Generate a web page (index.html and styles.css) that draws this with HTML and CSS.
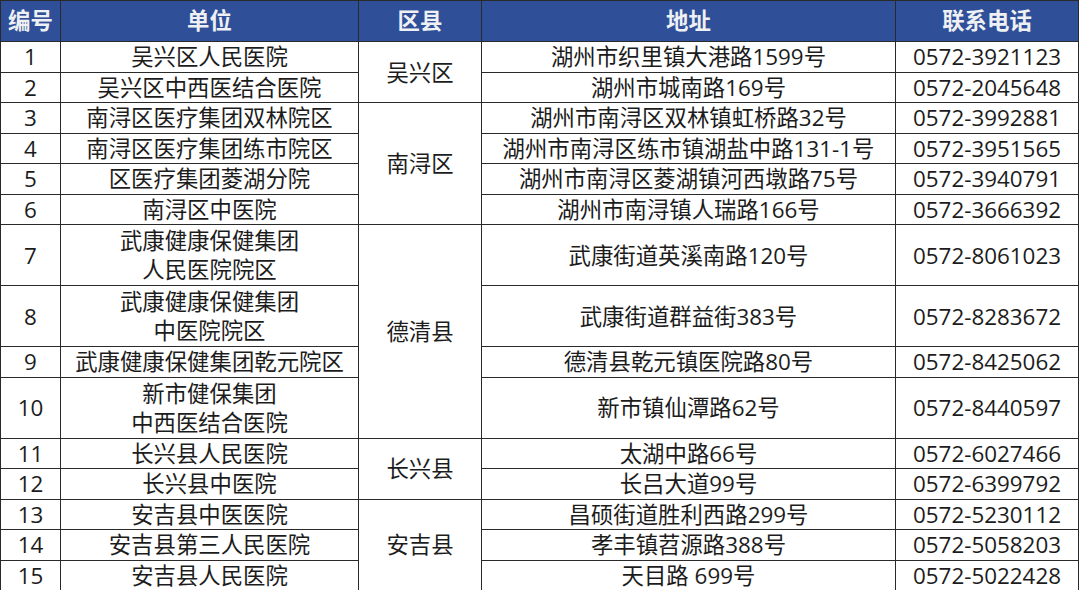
FILE: index.html
```html
<!DOCTYPE html>
<html lang="zh-CN">
<head>
<meta charset="utf-8">
<link rel="stylesheet" href="styles.css">
</head>
<body>
<table class="grid">
  <colgroup>
    <col class="c-no"><col class="c-unit"><col class="c-area"><col class="c-addr"><col class="c-tel">
  </colgroup>
  <thead>
    <tr class="head"><th>编号</th><th>单位</th><th>区县</th><th>地址</th><th>联系电话</th></tr>
  </thead>
  <tbody>
    <tr class="r1"><td>1</td><td>吴兴区人民医院</td><td rowspan="2">吴兴区</td><td>湖州市织里镇大港路1599号</td><td>0572-3921123</td></tr>
    <tr class="r1"><td>2</td><td>吴兴区中西医结合医院</td><td>湖州市城南路169号</td><td>0572-2045648</td></tr>
    <tr class="r1"><td>3</td><td>南浔区医疗集团双林院区</td><td rowspan="4">南浔区</td><td>湖州市南浔区双林镇虹桥路32号</td><td>0572-3992881</td></tr>
    <tr class="r1"><td>4</td><td>南浔区医疗集团练市院区</td><td>湖州市南浔区练市镇湖盐中路131-1号</td><td>0572-3951565</td></tr>
    <tr class="r1"><td>5</td><td>区医疗集团菱湖分院</td><td>湖州市南浔区菱湖镇河西墩路75号</td><td>0572-3940791</td></tr>
    <tr class="r1"><td>6</td><td>南浔区中医院</td><td>湖州市南浔镇人瑞路166号</td><td>0572-3666392</td></tr>
    <tr class="r2"><td>7</td><td>武康健康保健集团<br>人民医院院区</td><td rowspan="4">德清县</td><td>武康街道英溪南路120号</td><td>0572-8061023</td></tr>
    <tr class="r2"><td>8</td><td>武康健康保健集团<br>中医院院区</td><td>武康街道群益街383号</td><td>0572-8283672</td></tr>
    <tr class="r1"><td>9</td><td>武康健康保健集团乾元院区</td><td>德清县乾元镇医院路80号</td><td>0572-8425062</td></tr>
    <tr class="r2"><td>10</td><td>新市健保集团<br>中西医结合医院</td><td>新市镇仙潭路62号</td><td>0572-8440597</td></tr>
    <tr class="r1"><td>11</td><td>长兴县人民医院</td><td rowspan="2">长兴县</td><td>太湖中路66号</td><td>0572-6027466</td></tr>
    <tr class="r1"><td>12</td><td>长兴县中医院</td><td>长吕大道99号</td><td>0572-6399792</td></tr>
    <tr class="r1"><td>13</td><td>安吉县中医医院</td><td rowspan="3">安吉县</td><td>昌硕街道胜利西路299号</td><td>0572-5230112</td></tr>
    <tr class="r1"><td>14</td><td>安吉县第三人民医院</td><td>孝丰镇苕源路388号</td><td>0572-5058203</td></tr>
    <tr class="r1"><td>15</td><td>安吉县人民医院</td><td>天目路 699号</td><td>0572-5022428</td></tr>
  </tbody>
</table>
</body>
</html>
```

FILE: styles.css
```css
html, body {
  margin: 0;
  padding: 0;
  background: #ffffff;
}
.grid {
  border-collapse: collapse;
  table-layout: fixed;
  width: 1078px;
  font-family: "Open Sans", "Noto Sans CJK SC", sans-serif;
  font-size: 22.4px;
  color: #1c1c1c;
  border: 1px solid #222222;
}
.c-no { width: 60px; }
.c-unit { width: 298px; }
.c-area { width: 123px; }
.c-addr { width: 414px; }
.c-tel { width: 183px; }
.grid th, .grid td {
  border: 1px solid #2a2a2a;
  padding: 0;
  text-align: center;
  vertical-align: middle;
  white-space: nowrap;
  overflow: hidden;
}
.grid th {
  background: #2f4f98;
  color: #eef0f4;
  font-weight: 700;
  font-size: 22.4px;
  height: 40px;
  line-height: 40px;
}
.grid td {
  line-height: 29px;
}
.r1 td { height: 29.5px; }
.r2 td { height: 60px; }
```
